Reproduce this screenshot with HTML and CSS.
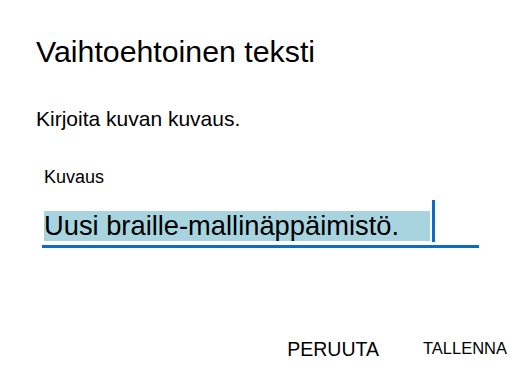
FILE: index.html
```html
<!DOCTYPE html>
<html lang="fi">
<head>
    <meta charset="UTF-8">
    <meta name="viewport" content="width=device-width, initial-scale=1.0">
    <title>Vaihtoehtoinen teksti</title>
    <link rel="stylesheet" href="styles.css">
</head>
<body>
    <div class="dialog">
        <h1 class="title">Vaihtoehtoinen teksti</h1>
        <p class="prompt">Kirjoita kuvan kuvaus.</p>

        <div class="field">
            <div class="field-label">Kuvaus</div>
            <div class="field-input">
                <span class="selection">Uusi braille-mallinäppäimistö.</span>
                <span class="caret"></span>
            </div>
        </div>

        <div class="actions">
            <button class="action-button cancel">PERUUTA</button>
            <button class="action-button save">TALLENNA</button>
        </div>
    </div>
</body>
</html>
```
FILE: styles.css
```css
* {
    margin: 0;
    padding: 0;
    box-sizing: border-box;
}

body {
    font-family: 'Liberation Sans', Arial, sans-serif;
    background: #fff;
    color: #000;
}

.dialog {
    padding: 34px 13px 0 36px;
}

.title {
    font-size: 30.3px;
    font-weight: normal;
    line-height: 1.2;
}

.prompt {
    margin-top: 37px;
    font-size: 21px;
    line-height: 1.15;
}

.field {
    margin: 36px 28px 0 6px;
}

.field-label {
    font-size: 18px;
    line-height: 1.15;
    margin-left: 2px;
}

.field-input {
    margin-top: 12px;
    display: flex;
    align-items: flex-end;
    padding-left: 2px;
    padding-bottom: 3px;
    border-bottom: 3px solid #0a6cc4;
}

.selection {
    font-size: 27.3px;
    line-height: 30px;
    background: #a8d4e0;
    padding-right: 31px;
    margin-bottom: 1px;
}

.caret {
    width: 3px;
    height: 42px;
    margin-left: 2px;
    background: #0a6cc4;
}

.actions {
    display: flex;
    justify-content: flex-end;
    align-items: flex-start;
    gap: 44px;
    margin-top: 90px;
}

.action-button {
    font-family: inherit;
    background: none;
    border: none;
    color: #000;
    line-height: 1.2;
    cursor: pointer;
}

.cancel {
    font-size: 19.5px;
}

.save {
    font-size: 16.5px;
    margin-top: 1px;
}
```
